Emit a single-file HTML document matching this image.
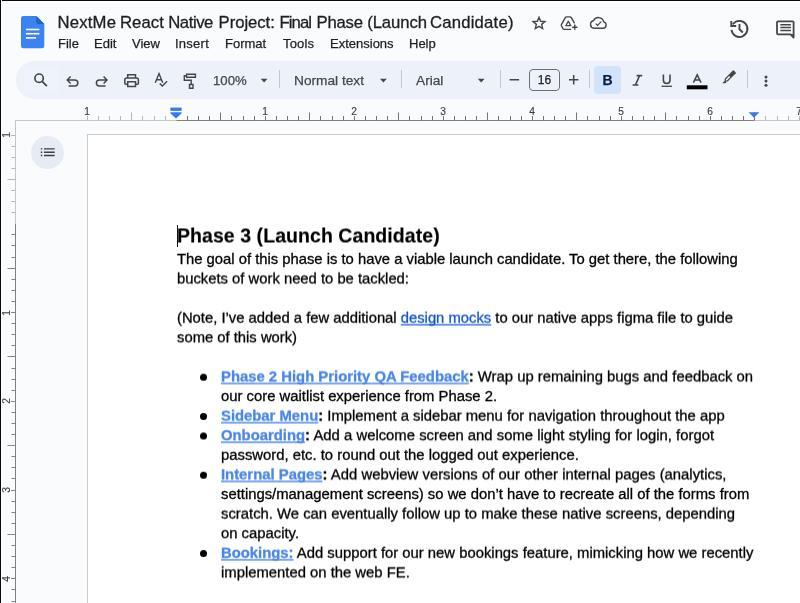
<!DOCTYPE html>
<html lang="en">
<head>
<meta charset="utf-8">
<title>NextMe React Native Project: Final Phase (Launch Candidate)</title>
<style>
*{margin:0;padding:0;box-sizing:border-box}
html,body{width:800px;height:603px;overflow:hidden;background:#f9fbfd}
body{position:relative;font-family:"Liberation Sans",Arial,sans-serif;color:#000}
.abs{position:absolute}
.bt{left:0;top:0;width:800px;height:3px;background:#fff;border-top:1px solid #0a0a0e}
.bl{left:0;top:0;width:2px;height:603px;background:#fff;border-left:1px solid #0a0a0e}
.title{top:12px;font-size:16.7px;line-height:21px;color:#1f1f1f;white-space:nowrap;-webkit-text-stroke:0.3px currentColor}
.menu{top:36px;font-size:13px;line-height:16px;color:#1f1f1f;white-space:nowrap;-webkit-text-stroke:0.25px currentColor}
.pill{left:16px;top:61px;width:800px;height:37.5px;border-radius:18.5px;background:#edf2fa}
.tb{font-size:13.5px;line-height:16px;color:#444746;white-space:nowrap;top:72px;-webkit-text-stroke:0.25px currentColor}
.sep{top:70px;width:1px;height:18px;background:#c7c7c7}
.ln{position:absolute;white-space:nowrap;font-size:14.8px;line-height:19px;height:19px;color:#000;-webkit-text-stroke:0.3px currentColor}
.ln b{font-weight:700}
a.k{color:#1155cc;text-decoration:underline;text-decoration-skip-ink:none;text-decoration-thickness:2px;text-underline-offset:1px;text-decoration-color:rgba(17,85,204,.62)}
a.h{color:#4a86e8;font-weight:700;text-decoration:underline;text-decoration-skip-ink:none;text-decoration-thickness:2px;text-underline-offset:1px;text-decoration-color:rgba(74,134,232,.72)}
.dot{position:absolute;left:200px;width:7px;height:7px;border-radius:50%;background:#000}
svg{position:absolute;overflow:visible}
.rn{position:absolute;font-size:10.2px;line-height:10px;color:#3c4043;-webkit-text-stroke:0.15px currentColor;width:12px;text-align:center}
.gs{will-change:transform}
</style>
</head>
<body>
<div class="abs" style="left:87px;top:134px;width:760px;height:480px;background:#fff;border:1px solid #c9cbce"></div>
<svg style="left:20.8px;top:15.8px" width="24" height="33" viewBox="0 0 24 33">
  <path d="M2.2 0H15.3L23.3 8V30A2.2 2.2 0 0 1 21.100 32.200H2.200A2.200 2.200 0 0 1 0 30V2.200A2.200 2.200 0 0 1 2.200 0Z" fill="#3b83f4"/>
  <path d="M15.300 0L23.300 8H17.300A2 2 0 0 1 15.300 6Z" fill="#1a63d6"/>
  <rect x="4.900" y="12.700" width="13.500" height="1.600" fill="#fff"/>
  <rect x="4.900" y="16.900" width="13.500" height="1.600" fill="#fff"/>
  <rect x="4.900" y="21.100" width="10.200" height="1.600" fill="#fff"/>
</svg>
<div class="abs title gs" style="left:0;width:600px;height:21px"><span style="position:absolute;left:57.4px;top:0;letter-spacing:0.22px">NextMe</span> <span style="position:absolute;left:119.9px;top:0;letter-spacing:0.1px">React</span> <span style="position:absolute;left:168.2px;top:0;letter-spacing:-0.42px">Native</span> <span style="position:absolute;left:218.6px;top:0;letter-spacing:-0.05px">Project:</span> <span style="position:absolute;left:279.6px;top:0;letter-spacing:-0.95px">Final</span> <span style="position:absolute;left:316.5px;top:0;letter-spacing:-0.2px">Phase</span> <span style="position:absolute;left:367.2px;top:0;letter-spacing:-0.08px">(Launch</span> <span style="position:absolute;left:429.9px;top:0;letter-spacing:0.22px">Candidate)</span></div>
<div class="abs menu gs" style="left:57.9px;letter-spacing:0px">File</div>
<div class="abs menu gs" style="left:94.3px;letter-spacing:0px">Edit</div>
<div class="abs menu gs" style="left:132.2px;letter-spacing:0px">View</div>
<div class="abs menu gs" style="left:175px;letter-spacing:0.25px">Insert</div>
<div class="abs menu gs" style="left:225.4px;letter-spacing:0px">Format</div>
<div class="abs menu gs" style="left:283.4px;letter-spacing:0.15px">Tools</div>
<div class="abs menu gs" style="left:329.8px;letter-spacing:0px">Extensions</div>
<div class="abs menu gs" style="left:409.4px;letter-spacing:0px">Help</div>
<div class="abs pill"></div>
<div class="abs" style="left:24px;top:67px;width:35px;height:26px;background:#eff3fb"></div>
<div class="abs" style="left:594px;top:66px;width:27px;height:27.500px;border-radius:4px;background:#d3e3fd"></div>
<svg style="left:0;top:0" width="800" height="603" viewBox="0 0 800 603" fill="none" stroke="#444746" stroke-width="1.5" stroke-linecap="butt" stroke-linejoin="miter" >
<!-- search -->
<circle cx="39.1" cy="78.2" r="4.2" stroke-width="1.7"/><path d="M42.1 81.3L46.9 86.1" stroke-width="1.8"/>
<!-- undo -->
<path d="M70.6 76.4L67.2 80L70.6 83.6M67.6 80H74.8A3 3 0 0 1 74.8 86H68.6"/>
<!-- redo -->
<path d="M103.6 76.4L107 80L103.6 83.6M106.6 80H99.4A3 3 0 0 0 99.4 86H105.600"/>
<!-- print -->
<path d="M127.7 78V74.7H135.5V78M127.7 84.3H125.8A1 1 0 0 1 124.8 83.3V80A2 2 0 0 1 126.8 78H136.4A2 2 0 0 1 138.4 80V83.3A1 1 0 0 1 137.4 84.3H135.5M127.7 81.800H135.500V86.600H127.700Z"/>
<!-- spellcheck -->
<path d="M155.3 82.8L159 73.6L162.7 82.8M156.7 79.7H161.3M159.7 83.5L162.3 86.1L167.1 81.3" stroke-width="1.4"/>
<!-- paint roller -->
<path d="M186.6 74.3H195.4V77.2H186.6ZM186.600 75.700H184.300V80.200H191.200V84.300M189.500 84.500H193V88.300H189.500Z" stroke-width="1.4"/>
<!-- minus / plus -->
<path d="M509.6 79.8H519.1M569 79.8H578.4M573.7 75.1V84.500"/>
<!-- italic -->
<path d="M636.6 75.6H642.2M632.6 85H638.4M639.6 75.6L635.4 85" stroke-width="1.6"/>
<!-- underline -->
<path d="M663.4 74.6V80.2A3.3 3.3 0 0 0 670 80.200V74.600" stroke-width="1.6"/><path d="M661.6 86.300H672" stroke-width="1.3"/>
<!-- text colour -->
<path d="M693.4 82.600L697.200 74.800L701 82.600M694.800 79.900H699.600" stroke-width="1.5"/>
<rect x="686.8" y="85.3" width="20.7" height="4" fill="#000" stroke="none"/>
<!-- highlighter -->
<path d="M728.7 74.7L732.8 70.600A0.800 0.800 0 0 1 733.900 70.600L735.700 72.400A0.800 0.800 0 0 1 735.700 73.500L731.500 77.600Z" fill="#444746" stroke="none"/>
<path d="M729.100 75.200L731.100 77.200L727.300 81H725.300V79Z" stroke-width="1.200" stroke-linejoin="round"/>
<path d="M722.300 83.200L725 80.400L726.600 82L725.400 83.200Z" fill="#444746" stroke="none"/>
<!-- more -->
<circle cx="766" cy="77" r="1.5" fill="#444746" stroke="none"/><circle cx="766" cy="81.1" r="1.5" fill="#444746" stroke="none"/><circle cx="766" cy="85.2" r="1.5" fill="#444746" stroke="none"/>
<!-- dropdown arrows -->
<path d="M260.7 78.800H267.500L264.100 82.400Z" fill="#444746" stroke="none"/>
<path d="M380 78.800H386.800L383.400 82.400Z" fill="#444746" stroke="none"/>
<path d="M477.8 78.800H484.600L481.200 82.400Z" fill="#444746" stroke="none"/>
</svg>
<div class="abs tb gs" style="left:213.3px;top:72.5px;font-size:13.2px">100%</div>
<div class="abs sep" style="left:279px"></div>
<div class="abs tb gs" style="left:294px;top:72.5px;font-size:13.7px">Normal text</div>
<div class="abs sep" style="left:401px"></div>
<div class="abs tb gs" style="left:416px;top:72.5px;font-size:13.7px">Arial</div>
<div class="abs sep" style="left:499.5px"></div>
<div class="abs" style="left:529px;top:69px;width:31px;height:22px;border:1px solid #6b6e70;border-radius:4px"></div>
<div class="abs tb gs" style="left:529px;top:72.3px;width:31px;text-align:center;color:#1f1f1f;font-size:12px">16</div>
<div class="abs sep" style="left:589px"></div>
<div class="abs tb gs" style="left:594px;top:72.3px;width:27px;text-align:center;font-weight:700;color:#041e49;font-size:14px">B</div>
<div class="abs sep" style="left:747px"></div>
<svg style="left:0;top:0" width="800" height="603" viewBox="0 0 800 603" fill="none" stroke="#444746" stroke-width="1.5" stroke-linecap="butt" stroke-linejoin="miter" ><path d="M15 120.5H176.3" stroke="#c4c7c5" stroke-width="1"/><path d="M176.3 120.5H754.5" stroke="#808080" stroke-width="1"/><path d="M754.5 120.5H800" stroke="#c4c7c5" stroke-width="1"/><path d="M87.5 116V120.5" stroke="#b5b8bb" stroke-width="1"/><path d="M98.5 116V120.5" stroke="#b5b8bb" stroke-width="1"/><path d="M109.5 116V120.5" stroke="#b5b8bb" stroke-width="1"/><path d="M120.5 116V120.5" stroke="#b5b8bb" stroke-width="1"/><path d="M131.5 112.5V120.5" stroke="#b5b8bb" stroke-width="1"/><path d="M142.5 116V120.5" stroke="#b5b8bb" stroke-width="1"/><path d="M154.5 116V120.5" stroke="#b5b8bb" stroke-width="1"/><path d="M165.5 116V120.5" stroke="#b5b8bb" stroke-width="1"/><path d="M187.5 116V120.5" stroke="#757575" stroke-width="1"/><path d="M198.5 116V120.5" stroke="#757575" stroke-width="1"/><path d="M209.5 116V120.5" stroke="#757575" stroke-width="1"/><path d="M220.5 112.5V120.5" stroke="#757575" stroke-width="1"/><path d="M231.5 116V120.5" stroke="#757575" stroke-width="1"/><path d="M243.5 116V120.5" stroke="#757575" stroke-width="1"/><path d="M254.5 116V120.5" stroke="#757575" stroke-width="1"/><path d="M265.5 116V120.5" stroke="#757575" stroke-width="1"/><path d="M276.5 116V120.5" stroke="#757575" stroke-width="1"/><path d="M287.5 116V120.5" stroke="#757575" stroke-width="1"/><path d="M298.5 116V120.5" stroke="#757575" stroke-width="1"/><path d="M309.5 112.5V120.5" stroke="#757575" stroke-width="1"/><path d="M320.5 116V120.5" stroke="#757575" stroke-width="1"/><path d="M332.5 116V120.5" stroke="#757575" stroke-width="1"/><path d="M343.5 116V120.5" stroke="#757575" stroke-width="1"/><path d="M354.5 116V120.5" stroke="#757575" stroke-width="1"/><path d="M365.5 116V120.5" stroke="#757575" stroke-width="1"/><path d="M376.5 116V120.5" stroke="#757575" stroke-width="1"/><path d="M387.5 116V120.5" stroke="#757575" stroke-width="1"/><path d="M398.5 112.5V120.5" stroke="#757575" stroke-width="1"/><path d="M409.5 116V120.5" stroke="#757575" stroke-width="1"/><path d="M421.5 116V120.5" stroke="#757575" stroke-width="1"/><path d="M432.5 116V120.5" stroke="#757575" stroke-width="1"/><path d="M443.5 116V120.5" stroke="#757575" stroke-width="1"/><path d="M454.5 116V120.5" stroke="#757575" stroke-width="1"/><path d="M465.5 116V120.5" stroke="#757575" stroke-width="1"/><path d="M476.5 116V120.5" stroke="#757575" stroke-width="1"/><path d="M487.5 112.5V120.5" stroke="#757575" stroke-width="1"/><path d="M498.5 116V120.5" stroke="#757575" stroke-width="1"/><path d="M510.5 116V120.5" stroke="#757575" stroke-width="1"/><path d="M521.5 116V120.5" stroke="#757575" stroke-width="1"/><path d="M532.5 116V120.5" stroke="#757575" stroke-width="1"/><path d="M543.5 116V120.5" stroke="#757575" stroke-width="1"/><path d="M554.5 116V120.5" stroke="#757575" stroke-width="1"/><path d="M565.5 116V120.5" stroke="#757575" stroke-width="1"/><path d="M576.5 112.5V120.5" stroke="#757575" stroke-width="1"/><path d="M587.5 116V120.5" stroke="#757575" stroke-width="1"/><path d="M599.5 116V120.5" stroke="#757575" stroke-width="1"/><path d="M610.5 116V120.5" stroke="#757575" stroke-width="1"/><path d="M621.5 116V120.5" stroke="#757575" stroke-width="1"/><path d="M632.5 116V120.5" stroke="#757575" stroke-width="1"/><path d="M643.5 116V120.5" stroke="#757575" stroke-width="1"/><path d="M654.5 116V120.5" stroke="#757575" stroke-width="1"/><path d="M665.5 112.5V120.5" stroke="#757575" stroke-width="1"/><path d="M676.5 116V120.5" stroke="#757575" stroke-width="1"/><path d="M688.5 116V120.5" stroke="#757575" stroke-width="1"/><path d="M699.5 116V120.5" stroke="#757575" stroke-width="1"/><path d="M710.5 116V120.5" stroke="#757575" stroke-width="1"/><path d="M721.5 116V120.5" stroke="#757575" stroke-width="1"/><path d="M732.5 116V120.5" stroke="#757575" stroke-width="1"/><path d="M743.5 116V120.5" stroke="#757575" stroke-width="1"/><path d="M754.5 112.5V120.5" stroke="#757575" stroke-width="1"/><path d="M765.5 116V120.5" stroke="#b5b8bb" stroke-width="1"/><path d="M777.5 116V120.5" stroke="#b5b8bb" stroke-width="1"/><path d="M788.5 116V120.5" stroke="#b5b8bb" stroke-width="1"/><path d="M799.5 116V120.5" stroke="#b5b8bb" stroke-width="1"/><path d="M15.5 120.5V223.8" stroke="#c4c7c5" stroke-width="1"/><path d="M15.5 223.8V603" stroke="#808080" stroke-width="1"/><path d="M11 135.5H15.5" stroke="#b5b8bb" stroke-width="1"/><path d="M11.5 146.5H15.5" stroke="#b5b8bb" stroke-width="1"/><path d="M11.5 157.5H15.5" stroke="#b5b8bb" stroke-width="1"/><path d="M11.5 168.5H15.5" stroke="#b5b8bb" stroke-width="1"/><path d="M7.5 179.5H15.5" stroke="#b5b8bb" stroke-width="1"/><path d="M11.5 190.5H15.5" stroke="#b5b8bb" stroke-width="1"/><path d="M11.5 201.5H15.5" stroke="#b5b8bb" stroke-width="1"/><path d="M11.5 212.5H15.5" stroke="#b5b8bb" stroke-width="1"/><path d="M11.5 234.5H15.5" stroke="#80868b" stroke-width="1"/><path d="M11.5 245.5H15.5" stroke="#80868b" stroke-width="1"/><path d="M11.5 257.5H15.5" stroke="#80868b" stroke-width="1"/><path d="M7.5 268.5H15.5" stroke="#80868b" stroke-width="1"/><path d="M11.5 279.5H15.5" stroke="#80868b" stroke-width="1"/><path d="M11.5 290.5H15.5" stroke="#80868b" stroke-width="1"/><path d="M11.5 301.5H15.5" stroke="#80868b" stroke-width="1"/><path d="M11 312.5H15.5" stroke="#80868b" stroke-width="1"/><path d="M11.5 323.5H15.5" stroke="#80868b" stroke-width="1"/><path d="M11.5 334.5H15.5" stroke="#80868b" stroke-width="1"/><path d="M11.5 345.5H15.5" stroke="#80868b" stroke-width="1"/><path d="M7.5 356.5H15.5" stroke="#80868b" stroke-width="1"/><path d="M11.5 368.5H15.5" stroke="#80868b" stroke-width="1"/><path d="M11.5 379.5H15.5" stroke="#80868b" stroke-width="1"/><path d="M11.5 390.5H15.5" stroke="#80868b" stroke-width="1"/><path d="M11 401.5H15.5" stroke="#80868b" stroke-width="1"/><path d="M11.5 412.5H15.5" stroke="#80868b" stroke-width="1"/><path d="M11.5 423.5H15.5" stroke="#80868b" stroke-width="1"/><path d="M11.5 434.5H15.5" stroke="#80868b" stroke-width="1"/><path d="M7.5 445.5H15.5" stroke="#80868b" stroke-width="1"/><path d="M11.5 456.5H15.5" stroke="#80868b" stroke-width="1"/><path d="M11.5 467.5H15.5" stroke="#80868b" stroke-width="1"/><path d="M11.5 478.5H15.5" stroke="#80868b" stroke-width="1"/><path d="M11 490.5H15.5" stroke="#80868b" stroke-width="1"/><path d="M11.5 501.5H15.5" stroke="#80868b" stroke-width="1"/><path d="M11.5 512.5H15.5" stroke="#80868b" stroke-width="1"/><path d="M11.5 523.5H15.5" stroke="#80868b" stroke-width="1"/><path d="M7.5 534.5H15.5" stroke="#80868b" stroke-width="1"/><path d="M11.5 545.5H15.5" stroke="#80868b" stroke-width="1"/><path d="M11.5 556.5H15.5" stroke="#80868b" stroke-width="1"/><path d="M11.5 567.5H15.5" stroke="#80868b" stroke-width="1"/><path d="M11 578.5H15.5" stroke="#80868b" stroke-width="1"/><path d="M11.5 589.5H15.5" stroke="#80868b" stroke-width="1"/><path d="M11.5 601.5H15.5" stroke="#80868b" stroke-width="1"/><path d="M170.4 107.6H181.6V110.9H170.4Z" fill="#3b78e7" stroke="none"/><path d="M170.4 112.2H181.6V113.2L176 118.6L170.4 113.2Z" fill="#3b78e7" stroke="none"/><path d="M748.6 112.2H759.4L754 117.8Z" fill="#3b78e7" stroke="none"/></svg>
<div class="rn gs" style="left:80.70px;top:107.1px">1</div>
<div class="rn gs" style="left:258.70px;top:107.1px">1</div>
<div class="rn gs" style="left:347.70px;top:107.1px">2</div>
<div class="rn gs" style="left:436.70px;top:107.1px">3</div>
<div class="rn gs" style="left:525.70px;top:107.1px">4</div>
<div class="rn gs" style="left:614.70px;top:107.1px">5</div>
<div class="rn gs" style="left:703.70px;top:107.1px">6</div>
<div class="rn gs" style="left:792.70px;top:107.1px">7</div>
<div class="rn gs" style="left:0.5px;top:130.04px;height:10px;transform:rotate(-90deg)">1</div>
<div class="rn gs" style="left:0.5px;top:307.56px;height:10px;transform:rotate(-90deg)">1</div>
<div class="rn gs" style="left:0.5px;top:396.32px;height:10px;transform:rotate(-90deg)">2</div>
<div class="rn gs" style="left:0.5px;top:485.08px;height:10px;transform:rotate(-90deg)">3</div>
<div class="rn gs" style="left:0.5px;top:573.84px;height:10px;transform:rotate(-90deg)">4</div>
<div class="abs" style="left:177px;top:224.500px;width:1px;height:22px;background:#111"></div>
<div class="ln gs" style="left:176.800px;top:223px;font-size:19.500px;line-height:24px;height:24px;font-weight:700;letter-spacing:0.06px;-webkit-text-stroke:0.15px currentColor;transform:translateY(0.500px) rotate(0.0001deg)">Phase 3 (Launch Candidate)</div>
<div class="ln gs" style="left:176.6px;top:249px;font-size:14.8px;word-spacing:0px;transform:translateY(0.95px) rotate(0.0001deg)">The goal of this phase is to have a viable launch candidate. To get there, the following</div>
<div class="ln gs" style="left:176.6px;top:269px;font-size:14.8px;word-spacing:0px;transform:translateY(0.54px) rotate(0.0001deg)">buckets of work need to be tackled:</div>
<div class="ln gs" style="left:176.6px;top:308px;font-size:14.8px;word-spacing:0px;transform:translateY(0.72px) rotate(0.0001deg)">(Note, I’ve added a few additional <a class="k">design mocks</a> to our native apps figma file to guide</div>
<div class="ln gs" style="left:176.6px;top:328px;font-size:14.8px;word-spacing:0px;transform:translateY(0.31px) rotate(0.0001deg)">some of this work)</div>
<div class="dot gs" style="top:373px;transform:translateY(0.790px) rotate(0.0001deg)"></div>
<div class="ln gs" style="left:220.7px;top:367px;font-size:14.83px;word-spacing:0.04px;transform:translateY(0.49px) rotate(0.0001deg)"><a class="h">Phase 2 High Priority QA Feedback</a><b>:</b> Wrap up remaining bugs and feedback on</div>
<div class="ln gs" style="left:220.7px;top:387px;font-size:14.83px;word-spacing:0px;transform:translateY(0.08px) rotate(0.0001deg)">our core waitlist experience from Phase 2.</div>
<div class="dot gs" style="top:412px;transform:translateY(0.970px) rotate(0.0001deg)"></div>
<div class="ln gs" style="left:220.7px;top:406px;font-size:14.83px;word-spacing:0px;transform:translateY(0.67px) rotate(0.0001deg)"><a class="h">Sidebar Menu</a><b>:</b> Implement a sidebar menu for navigation throughout the app</div>
<div class="dot gs" style="top:432px;transform:translateY(0.560px) rotate(0.0001deg)"></div>
<div class="ln gs" style="left:220.7px;top:426px;font-size:14.83px;word-spacing:0.09px;transform:translateY(0.26px) rotate(0.0001deg)"><a class="h">Onboarding</a><b>:</b> Add a welcome screen and some light styling for login, forgot</div>
<div class="ln gs" style="left:220.7px;top:445px;font-size:14.83px;word-spacing:0px;transform:translateY(0.85px) rotate(0.0001deg)">password, etc. to round out the logged out experience.</div>
<div class="dot gs" style="top:471px;transform:translateY(0.740px) rotate(0.0001deg)"></div>
<div class="ln gs" style="left:220.7px;top:465px;font-size:14.83px;word-spacing:0.1px;transform:translateY(0.44px) rotate(0.0001deg)"><a class="h">Internal Pages</a><b>:</b> Add webview versions of our other internal pages (analytics,</div>
<div class="ln gs" style="left:220.7px;top:485px;font-size:14.83px;word-spacing:0px;transform:translateY(0.03px) rotate(0.0001deg)">settings/management screens) so we don’t have to recreate all of the forms from</div>
<div class="ln gs" style="left:220.7px;top:504px;font-size:14.83px;word-spacing:0px;transform:translateY(0.62px) rotate(0.0001deg)">scratch. We can eventually follow up to make these native screens, depending</div>
<div class="ln gs" style="left:220.7px;top:524px;font-size:14.83px;word-spacing:0px;transform:translateY(0.21px) rotate(0.0001deg)">on capacity.</div>
<div class="dot gs" style="top:549px;transform:translateY(1.100px) rotate(0.0001deg)"></div>
<div class="ln gs" style="left:220.7px;top:543px;font-size:14.83px;word-spacing:0px;transform:translateY(0.8px) rotate(0.0001deg)"><a class="h">Bookings:</a> Add support for our new bookings feature, mimicking how we recently</div>
<div class="ln gs" style="left:220.7px;top:563px;font-size:14.83px;word-spacing:0px;transform:translateY(0.39px) rotate(0.0001deg)">implemented on the web FE.</div>
<div class="abs" style="left:31px;top:135.500px;width:33px;height:33px;border-radius:50%;background:#e6ebf4"></div>
<svg style="left:0;top:0" width="800" height="603" viewBox="0 0 800 603" fill="none" stroke="#444746" stroke-width="1.5" stroke-linecap="butt" stroke-linejoin="miter" >
<!-- star -->
<path d="M539.00 17.30L540.65 21.23L544.90 21.58L541.66 24.37L542.64 28.52L539.00 26.30L535.36 28.52L536.34 24.37L533.10 21.58L537.35 21.23Z" stroke-width="1.4" stroke-linejoin="miter"/>
<!-- drive add -->
<path d="M574.600 23.400L571.300 17.700A1.600 1.600 0 0 0 569.900 16.900H566.700A1.600 1.600 0 0 0 565.300 17.700L561.500 24.400A1.600 1.600 0 0 0 561.500 26L563 28.600A1.600 1.600 0 0 0 564.400 29.400H571" stroke-width="1.400" stroke-linejoin="round"/>
<path d="M568.300 21.200L570.800 25.700H565.800Z" stroke-width="1.300" stroke-linejoin="round"/>
<path d="M572.200 27.200H577.400M574.800 24.600V29.800" stroke-width="1.400"/>
<!-- cloud done -->
<path d="M594 28.200H603A3.200 3.200 0 0 0 603.700 21.900A5.400 5.400 0 0 0 593.500 20.700A3.800 3.800 0 0 0 594 28.200Z" stroke-width="1.400" stroke-linejoin="round"/>
<path d="M595.800 23.600L597.600 25.400L601.200 21.600" stroke-width="1.300"/>
<!-- history -->
<path d="M731.5 29.9A8 8 0 1 0 732.9 24.3" stroke-width="1.9"/>
<path d="M731.3 21.1V26M730.35 26H736.2" stroke-width="1.900"/>
<path d="M739.450 23.900V29.300L742.800 32.500" stroke-width="1.900"/>
<!-- comment -->
<path d="M778 21.300H792.600A1 1 0 0 1 793.600 22.300V37.600L790.600 34.300H778A1 1 0 0 1 777 33.300V22.300A1 1 0 0 1 778 21.300Z" stroke-width="1.800" stroke-linejoin="round"/>
<path d="M793.600 34V37.600L790.600 34.300Z" fill="#444746" stroke="none"/>
<path d="M780.400 24.700H790.900M780.400 27.600H790.900M780.400 30.500H790.900" stroke-width="1.500"/>
<!-- outline list -->
<path d="M44 148.900H54.700M44 152.200H54.700M44 155.500H54.700" stroke-width="1.400" stroke="#3c4043"/>
<path d="M40.800 148.900H42.300M40.800 152.200H42.300M40.800 155.500H42.300" stroke-width="1.400" stroke="#3c4043"/>
</svg>
<div class="abs bt"></div>
<div class="abs bl"></div>
</body>
</html>
